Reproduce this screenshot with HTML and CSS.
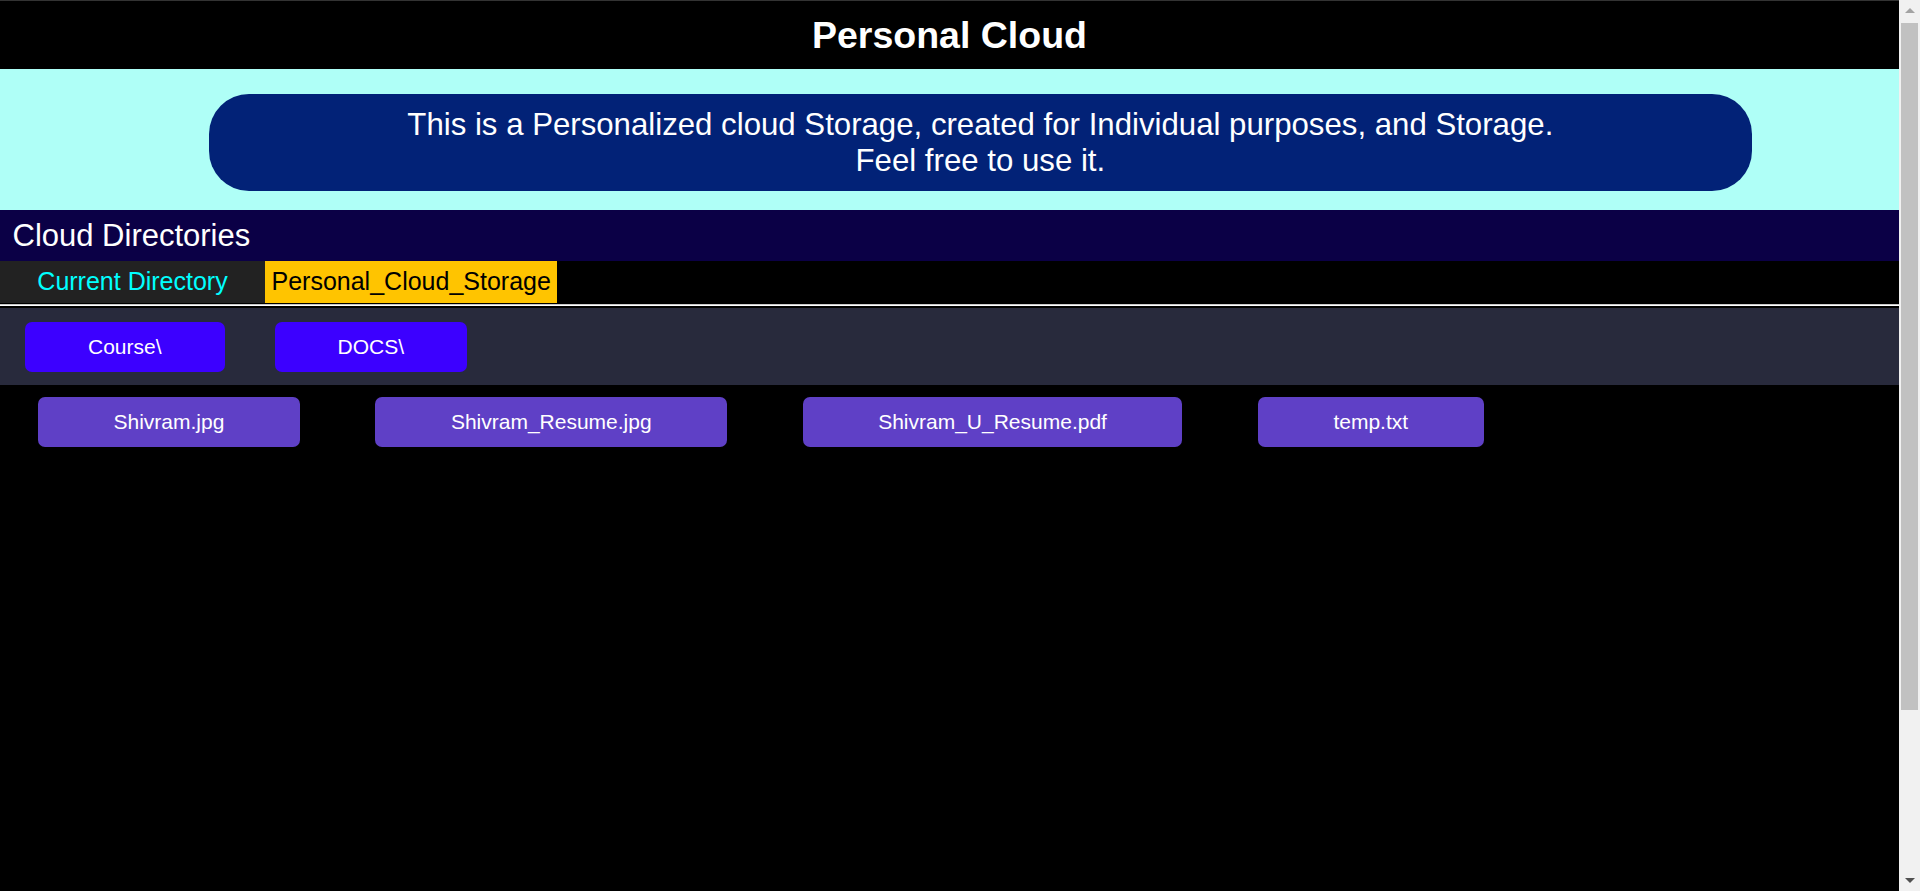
FILE: index.html
```html
<!DOCTYPE html>
<html lang="en">
<head>
<meta charset="utf-8">
<title>Personal Cloud</title>
<link rel="stylesheet" href="styles.css">
</head>
<body>
<header class="top">
  <h1 class="title">Personal Cloud</h1>
</header>
<section class="intro">
  <div class="banner">
    This is a Personalized cloud Storage, created for Individual purposes, and Storage.<br>
    Feel free to use it.
  </div>
</section>
<h2 class="dir-title">Cloud Directories</h2>
<div class="path-row">
  <div class="path-label">Current Directory</div>
  <div class="path-value">Personal_Cloud_Storage</div>
</div>
<div class="separator"></div>
<div class="folders">
  <a class="folder-btn">Course\</a>
  <a class="folder-btn">DOCS\</a>
</div>
<div class="files">
  <a class="file-btn">Shivram.jpg</a>
  <a class="file-btn">Shivram_Resume.jpg</a>
  <a class="file-btn">Shivram_U_Resume.pdf</a>
  <a class="file-btn">temp.txt</a>
</div>
<div class="scrollbar" aria-hidden="true">
  <div class="sb-btn"><span class="arrow-up"></span></div>
  <div class="sb-track"><div class="sb-thumb"></div></div>
  <div class="sb-btn"><span class="arrow-down"></span></div>
</div>
</body>
</html>
```
FILE: styles.css
```css
html {
  background: #000;
}
body {
  margin: 0 21px 0 0;
  background: #000;
  font-family: "Liberation Sans", Arial, sans-serif;
  color: #fff;
  min-height: 1100px;
}
.top {
  border-top: 1px solid #333;
  padding: 12.5px 0 12.4px;
  text-align: center;
  background: #000;
}
.title {
  margin: 0;
  font-size: 37.5px;
  font-weight: bold;
  line-height: normal;
}
.intro {
  background: #affff7;
  padding: 25px 0 19px;
}
.banner {
  margin-left: 11%;
  width: 81.25%;
  box-sizing: border-box;
  background: #022277;
  border-radius: 40px;
  padding: 13.5px 0 12px;
  text-align: center;
  font-size: 31.2px;
  line-height: 35.6px;
}
.dir-title {
  margin: 0;
  background: #0b0046;
  font-size: 31px;
  font-weight: normal;
  padding: 8px 12.5px 7.4px;
  line-height: normal;
}
.path-row {
  display: flex;
  height: 42px;
  font-size: 25px;
  background: #000;
}
.path-label {
  width: 265px;
  background: #222;
  color: #00ffff;
  text-align: center;
  padding-top: 6.5px;
  box-sizing: border-box;
}
.path-value {
  background: #ffc400;
  color: #000;
  padding: 6.5px 6.5px 0;
}
.separator {
  height: 2px;
  border-top: 1px solid #000;
  border-bottom: 2px solid #000;
  background: linear-gradient(#c8c8c8 50%, #fff 50%);
}
.folders {
  background: #282a3c;
  display: flex;
  gap: 50px;
  padding: 14px 25px 13px;
}
.folder-btn {
  display: flex;
  align-items: center;
  height: 50px;
  padding: 0 63px;
  background: #3c00ff;
  border-radius: 7px;
  font-size: 21px;
  color: #fff;
}
.files {
  display: flex;
  gap: 75.5px;
  padding: 12px 38px;
}
.file-btn {
  display: flex;
  align-items: center;
  height: 50px;
  padding: 0 75.5px;
  background: #5f40c6;
  border-radius: 7px;
  font-size: 21px;
  color: #fff;
}

/* emulated browser scrollbar */
.scrollbar {
  position: fixed;
  top: 0;
  right: 0;
  bottom: 0;
  width: 21px;
  background: #f1f1f1;
  display: flex;
  flex-direction: column;
}
.sb-btn {
  height: 21px;
  display: flex;
  align-items: center;
  justify-content: center;
}
.arrow-up {
  width: 0;
  height: 0;
  border-left: 5px solid transparent;
  border-right: 5px solid transparent;
  border-bottom: 5px solid #a3a3a3;
}
.arrow-down {
  width: 0;
  height: 0;
  border-left: 5px solid transparent;
  border-right: 5px solid transparent;
  border-top: 5px solid #505050;
}
.sb-track {
  flex: 1;
  padding: 2px 2px 0;
}
.sb-thumb {
  height: 687px;
  background: #c1c1c1;
}
```
